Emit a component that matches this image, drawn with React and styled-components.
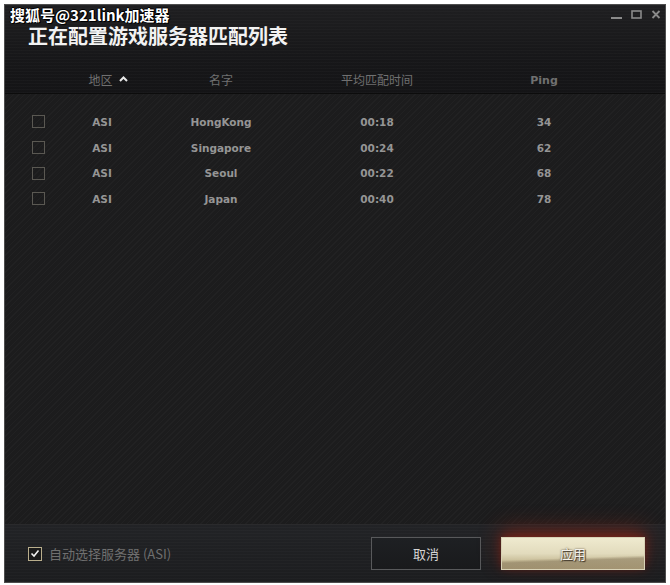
import styled, { createGlobalStyle } from "styled-components";

const GlobalStyle = createGlobalStyle`
  html, body {
    margin: 0;
    padding: 0;
    background: #ffffff;
  }
  body {
    font-family: "Noto Sans CJK SC", "Noto Sans", sans-serif;
  }
`;

const Page = styled.div`
  width: 670px;
  height: 585px;
  padding: 4px 0 0 4px;
  box-sizing: border-box;
`;

const Window = styled.div`
  position: relative;
  width: 662px;
  height: 579px;
  box-sizing: border-box;
  border: 1px solid #4d4d4d;
  display: flex;
  flex-direction: column;
  background: #1b1b1c;
  overflow: hidden;
`;

const Watermark = styled.div`
  position: absolute;
  left: 5px;
  top: 1px;
  font-size: 15px;
  font-weight: 700;
  color: #fff;
  text-shadow: 1px 1px 0 #000, -1px 0 0 #000, 0 -1px 0 #000, 1px 0 0 #000;
  line-height: 17px;
  z-index: 2;
`;

const Header = styled.div`
  position: relative;
  height: 88px;
  flex-shrink: 0;
  display: flex;
  flex-direction: column;
  border-bottom: 1px solid #0c0c0c;
  background:
    repeating-linear-gradient(
      0deg,
      rgba(255, 255, 255, 0.018) 0px,
      rgba(255, 255, 255, 0.018) 1px,
      transparent 1px,
      transparent 3px
    ),
    linear-gradient(180deg, #1f1f21 0%, #171719 60%, #141416 100%);
`;

const Title = styled.h1`
  margin: 21px 0 0 23px;
  font-size: 20px;
  font-weight: 700;
  color: #f2f2f2;
  line-height: 20px;
`;

const Controls = styled.div`
  position: absolute;
  right: 4px;
  top: 3px;
  display: flex;
  align-items: center;
  gap: 9px;
  color: #8a8a8a;
`;

const Grid = styled.div`
  display: grid;
  grid-template-columns: 65px 64px 174px 138px 196px 1fr;
  align-items: center;
  justify-items: center;
`;

const HeadRow = styled(Grid)`
  margin-top: auto;
  height: 28px;
  font-size: 12px;
  color: #707070;
`;

const HeadCell = styled.div`
  display: flex;
  align-items: center;
  gap: 6px;
  font-family: ${(p) => (p.$latin ? '"DejaVu Sans", sans-serif' : "inherit")};
  font-weight: ${(p) => (p.$latin ? 700 : 400)};
  font-size: ${(p) => (p.$latin ? "11px" : "12px")};
  margin-top: ${(p) => (p.$latin ? "3px" : "0")};
  margin-left: ${(p) => (p.$shift ? "12px" : "0")};
`;

const Body = styled.div`
  flex: 1;
  padding-top: 15px;
  background:
    repeating-linear-gradient(
      -45deg,
      rgba(255, 255, 255, 0.022) 0px,
      rgba(255, 255, 255, 0.022) 1px,
      transparent 1px,
      transparent 4px
    ),
    #1c1c1d;
  border-bottom: 1px solid #2a2a2c;
`;

const Row = styled(Grid)`
  height: 25.7px;
  font-family: "DejaVu Sans", sans-serif;
  font-weight: 700;
  font-size: 10.5px;
  color: #959595;
`;

const Box = styled.span`
  width: 13px;
  height: 13px;
  box-sizing: border-box;
  border: 1px solid ${(p) => (p.$checked ? "#b9ae8c" : "#5a5852")};
  background: ${(p) => (p.$checked ? "#1a1a1a" : "transparent")};
  display: inline-flex;
  align-items: center;
  justify-content: center;
  justify-self: start;
  margin-left: 27px;
`;

const Footer = styled.div`
  height: 57px;
  flex-shrink: 0;
  display: flex;
  align-items: center;
  padding: 0 20px 0 23px;
  background:
    repeating-linear-gradient(
      0deg,
      rgba(255, 255, 255, 0.02) 0px,
      rgba(255, 255, 255, 0.02) 1px,
      transparent 1px,
      transparent 3px
    ),
    linear-gradient(180deg, #222326 0%, #1c1d1f 100%);
`;

const AutoLabel = styled.label`
  display: flex;
  align-items: center;
  gap: 7px;
  font-size: 13px;
  color: #6f6f6f;
  flex: 1;
`;

const FooterBox = styled(Box)`
  margin-left: 0;
  width: 14px;
  height: 14px;
`;

const Button = styled.button`
  height: 33px;
  box-sizing: border-box;
  font-family: inherit;
  font-size: 13px;
  cursor: pointer;
  display: flex;
  align-items: center;
  justify-content: center;
`;

const CancelButton = styled(Button)`
  width: 110px;
  margin-right: 20px;
  border: 1px solid #58595b;
  background: linear-gradient(180deg, #1e2023 0%, #191a1c 100%);
  color: #d6d6d6;
`;

const ApplyButton = styled(Button)`
  width: 144px;
  border: 1px solid #d8d2b6;
  color: #f4f1ea;
  text-shadow: 0 0 2px #4a3f30, 1px 1px 1px #3d3428;
  background:
    linear-gradient(
      178deg,
      transparent 0%,
      transparent 62%,
      rgba(120, 104, 78, 0.45) 70%,
      rgba(150, 134, 104, 0.55) 100%
    ),
    linear-gradient(180deg, #efeacf 0%, #e2dbbd 50%, #c8bd98 75%, #b4a680 100%);
  box-shadow:
    0 -8px 22px rgba(170, 40, 20, 0.45),
    0 -2px 8px rgba(140, 30, 15, 0.5);
`;

const rows = [
  { region: "ASI", name: "HongKong", time: "00:18", ping: 34 },
  { region: "ASI", name: "Singapore", time: "00:24", ping: 62 },
  { region: "ASI", name: "Seoul", time: "00:22", ping: 68 },
  { region: "ASI", name: "Japan", time: "00:40", ping: 78 },
];

function Caret() {
  return (
    <svg width="9" height="6" viewBox="0 0 9 6">
      <path d="M1 5 L4.5 1.5 L8 5" fill="none" stroke="#e8e8e8" strokeWidth="2" />
    </svg>
  );
}

function Check() {
  return (
    <svg width="10" height="9" viewBox="0 0 10 9">
      <path d="M1.5 4.5 L4 7 L8.5 1.5" fill="none" stroke="#f0f0f0" strokeWidth="1.6" />
    </svg>
  );
}

function WindowControls() {
  return (
    <Controls>
      <svg width="11" height="12" viewBox="0 0 11 12">
        <rect x="0" y="9" width="11" height="2" fill="currentColor" />
      </svg>
      <svg width="11" height="12" viewBox="0 0 11 12">
        <rect x="1" y="3" width="9" height="7" fill="none" stroke="currentColor" strokeWidth="1.6" />
      </svg>
      <svg width="10" height="12" viewBox="0 0 10 12">
        <path d="M1.5 3 L8.5 10 M8.5 3 L1.5 10" stroke="currentColor" strokeWidth="1.8" />
      </svg>
    </Controls>
  );
}

export default function App() {
  return (
    <>
      <GlobalStyle />
      <Page>
        <Window>
          <Watermark>搜狐号@321link加速器</Watermark>
          <Header>
            <WindowControls />
            <Title>正在配置游戏服务器匹配列表</Title>
            <HeadRow>
              <span />
              <HeadCell $shift>
                地区 <Caret />
              </HeadCell>
              <HeadCell>名字</HeadCell>
              <HeadCell>平均匹配时间</HeadCell>
              <HeadCell $latin>Ping</HeadCell>
            </HeadRow>
          </Header>
          <Body>
            {rows.map((r) => (
              <Row key={r.name}>
                <Box />
                <span>{r.region}</span>
                <span>{r.name}</span>
                <span>{r.time}</span>
                <span>{r.ping}</span>
              </Row>
            ))}
          </Body>
          <Footer>
            <AutoLabel>
              <FooterBox $checked>
                <Check />
              </FooterBox>
              自动选择服务器 (ASI)
            </AutoLabel>
            <CancelButton>取消</CancelButton>
            <ApplyButton>应用</ApplyButton>
          </Footer>
        </Window>
      </Page>
    </>
  );
}
